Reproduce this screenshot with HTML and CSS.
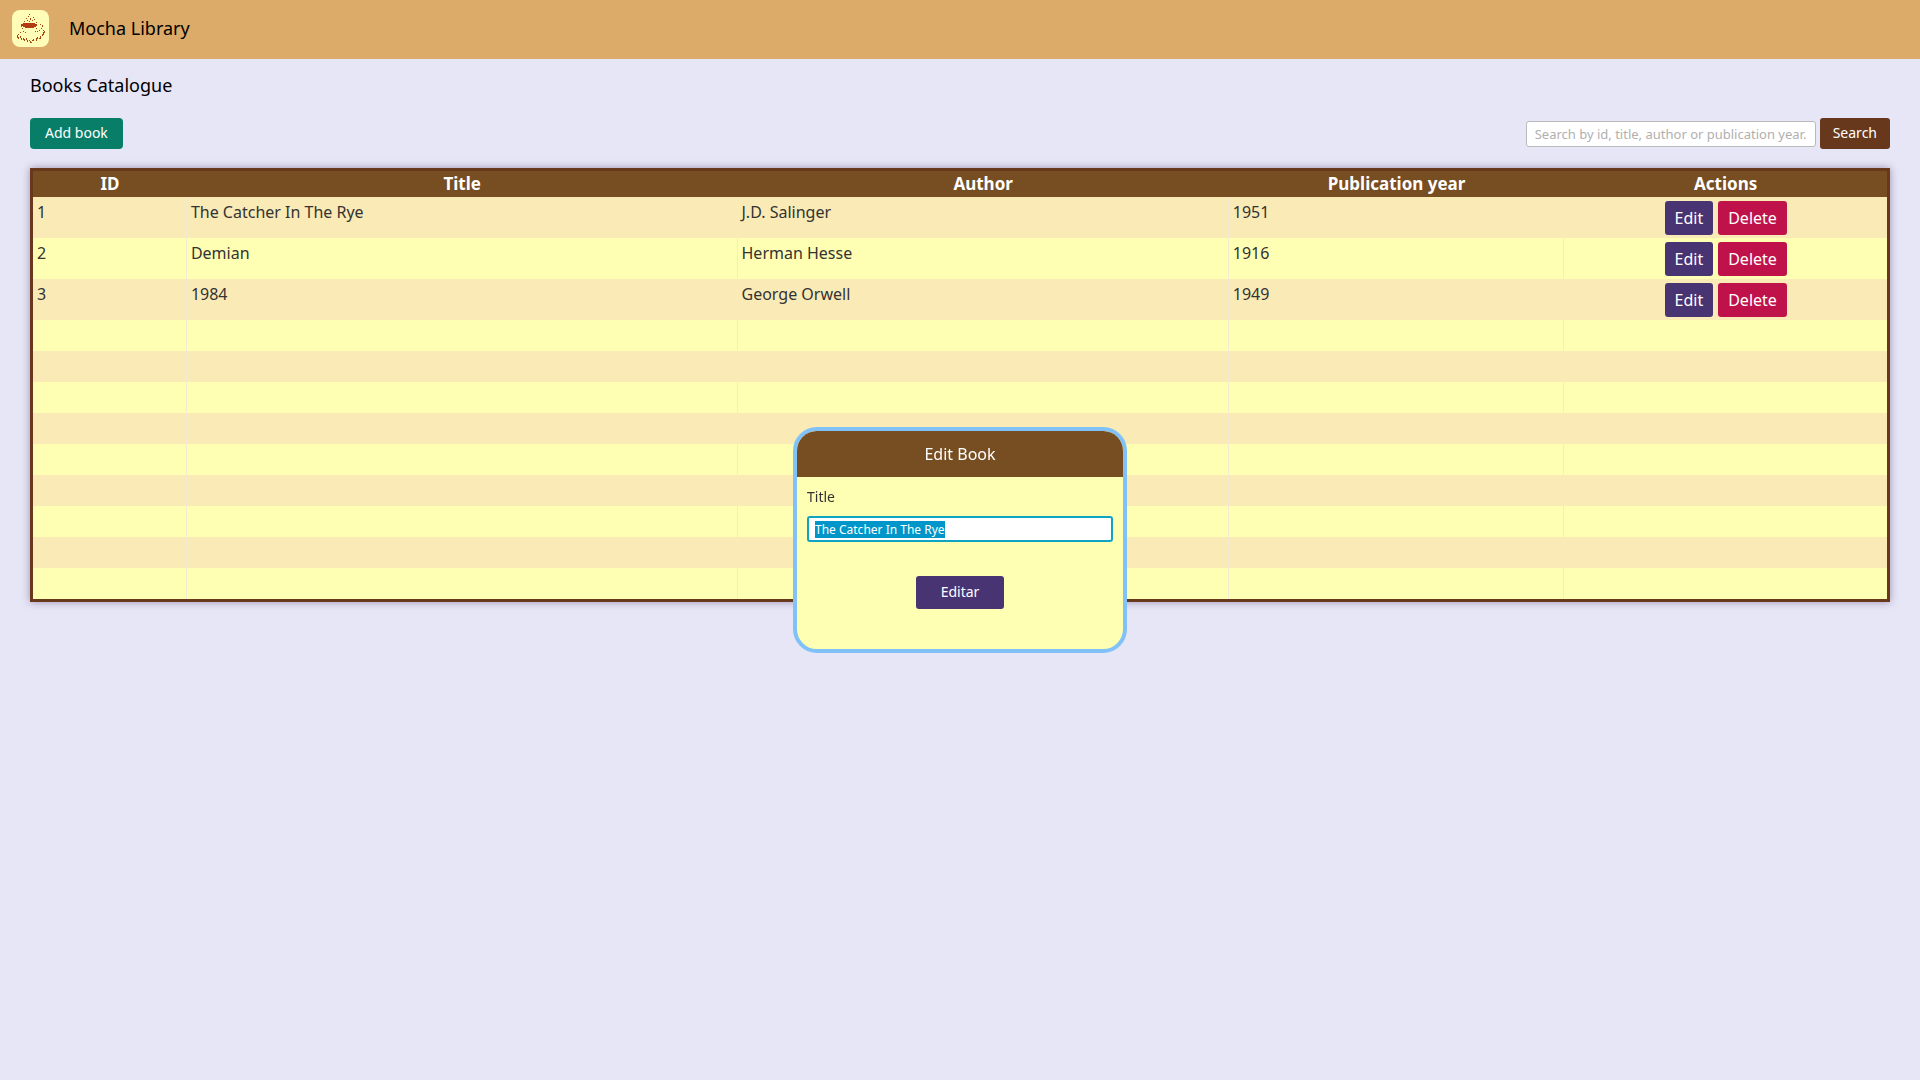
FILE: index.html
```html
<!DOCTYPE html>
<html lang="en">
<head>
<meta charset="utf-8">
<meta name="viewport" content="width=device-width, initial-scale=1">
<title>Mocha Library</title>
<link rel="stylesheet" href="styles.css">
</head>
<body>
<header class="topbar">
  <svg class="logo" viewBox="0 0 37 37" shape-rendering="crispEdges" aria-hidden="true">
    <rect width="37" height="37" rx="8" fill="#fffdb8" shape-rendering="auto"/>
    <path fill="#b23c12" d="M11 13h12v1h2v2h-1v1h-2v1h-9v-1h-2v-1h-2v-2h2z"/>
    <path fill="#a8480f" d="M17 4h1v1h-1zM14 8h1v1h-1zM16 6h1v1h-1zM18 8h1v2h-1zM21 7h1v1h-1zM15 10h1v1h-1zM20 10h1v1h-1zM22 9h1v1h-1zM12 11h1v1h-1zM17 11h1v1h-1zM24 12h1v1h-1zM9 15h1v2h-1zM10 18h1v1h-1zM11 21h1v1h-1zM13 22h1v1h-1zM24 18h1v1h-1zM23 21h1v1h-1zM28 14h1v1h-1zM30 15h1v2h-1zM29 18h1v1h-1zM27 20h1v1h-1zM25 21h1v1h-1zM8 22h1v1h-1zM6 24h1v1h-1zM31 20h1v1h-1zM5 25h1v3h-1zM6 27h1v2h-1zM8 26h1v2h-1zM9 28h1v2h-1zM11 28h1v2h-1zM12 29h1v2h-1zM14 28h1v2h-1zM15 30h1v2h-1zM17 30h1v1h-1zM18 31h1v2h-1zM19 32h1v1h-1zM21 29h1v2h-1zM20 30h1v1h-1zM24 28h1v3h-1zM25 27h1v2h-1zM28 26h1v3h-1zM27 28h1v1h-1zM31 22h1v3h-1zM30 24h1v2h-1zM32 21h1v2h-1z"/>
  </svg>
  <span class="brand">Mocha Library</span>
</header>

<main class="page">
  <h1 class="heading">Books Catalogue</h1>
  <div class="toolbar">
    <button class="btn btn-add" type="button">Add book</button>
    <form class="search" role="search">
      <input class="field search-field" type="text" aria-label="Search books" placeholder="Search by id, title, author or publication year.">
      <button class="btn btn-search" type="button">Search</button>
    </form>
  </div>

  <table class="books">
    <colgroup>
      <col class="col-id"><col class="col-title"><col class="col-author"><col class="col-year"><col class="col-actions">
    </colgroup>
    <thead>
      <tr><th>ID</th><th>Title</th><th>Author</th><th>Publication year</th><th>Actions</th></tr>
    </thead>
    <tbody>
      <tr><td>1</td><td>The Catcher In The Rye</td><td>J.D. Salinger</td><td>1951</td><td><div class="actions"><button class="btn btn-edit" type="button">Edit</button><button class="btn btn-delete" type="button">Delete</button></div></td></tr>
      <tr><td>2</td><td>Demian</td><td>Herman Hesse</td><td>1916</td><td><div class="actions"><button class="btn btn-edit" type="button">Edit</button><button class="btn btn-delete" type="button">Delete</button></div></td></tr>
      <tr><td>3</td><td>1984</td><td>George Orwell</td><td>1949</td><td><div class="actions"><button class="btn btn-edit" type="button">Edit</button><button class="btn btn-delete" type="button">Delete</button></div></td></tr>
      <tr><td></td><td></td><td></td><td></td><td></td></tr>
      <tr><td></td><td></td><td></td><td></td><td></td></tr>
      <tr><td></td><td></td><td></td><td></td><td></td></tr>
      <tr><td></td><td></td><td></td><td></td><td></td></tr>
      <tr><td></td><td></td><td></td><td></td><td></td></tr>
      <tr><td></td><td></td><td></td><td></td><td></td></tr>
      <tr><td></td><td></td><td></td><td></td><td></td></tr>
      <tr><td></td><td></td><td></td><td></td><td></td></tr>
      <tr><td></td><td></td><td></td><td></td><td></td></tr>
    </tbody>
  </table>
</main>

<div class="overlay">
  <form class="modal" role="dialog" aria-labelledby="modal-title">
    <h2 class="modal-title" id="modal-title">Edit Book</h2>
    <div class="modal-body">
      <label class="label" for="book-title">Title</label>
      <input class="field title-field" id="book-title" type="text" value="The Catcher In The Rye">
      <button class="btn btn-submit" type="button">Editar</button>
    </div>
  </form>
</div>
<script src="script.js"></script>
</body>
</html>
```
FILE: styles.css
```css
*,
*::before,
*::after {
  box-sizing: border-box;
}

body {
  margin: 0;
  min-height: 100vh;
  background: #e7e6f7;
  color: #333;
  font-family: "Noto Sans", sans-serif;
  font-size: 16px;
  line-height: 22px;
}

.topbar {
  display: flex;
  align-items: center;
  gap: 20px;
  height: 59px;
  padding: 0 12px 2px;
  background: #dcab69;
}

.logo {
  width: 37px;
  height: 37px;
}

.brand,
.heading {
  color: #000;
  font-size: 18px;
  font-weight: 400;
  line-height: 24px;
}

.brand {
  padding-bottom: 2px;
}

.page {
  padding: 14px 30px 30px;
}

.heading {
  margin: 0 0 21px;
}

.toolbar {
  display: flex;
  align-items: center;
  justify-content: space-between;
  margin-bottom: 19px;
}

.search {
  display: flex;
  align-items: center;
  gap: 4px;
}

.btn {
  border: 0;
  border-radius: 3px;
  color: #fff;
  font-family: inherit;
  font-size: 16px;
  line-height: 22px;
}

.btn-add,
.btn-search {
  height: 31px;
  padding: 0 13px 2px;
  font-size: 14px;
}

.btn-add {
  padding: 0 15px 2px;
  border-radius: 4px;
  background: #087e68;
}

.btn-search {
  background: #68381c;
}

.field {
  border: 1px solid #bababa;
  border-radius: 3px;
  background: #fff;
  color: #333;
  font-family: inherit;
}

.search-field {
  width: 290px;
  height: 26px;
  padding: 0 8px;
  font-size: 13px;
}

.search-field::placeholder {
  color: #b0b0b0;
}

.books {
  width: 100%;
  table-layout: fixed;
  border: 3px solid #68381c;
  border-spacing: 0;
  box-shadow: 0 0 8px rgba(40, 20, 60, 0.4);
}

.col-id { width: 8.3%; }
.col-title { width: 29.7%; }
.col-author { width: 26.5%; }
.col-year { width: 18.1%; }
.col-actions { width: 17.4%; }

.books th {
  height: 26px;
  padding: 0;
  background: #774d22;
  color: #fff;
  font-size: 17px;
  font-weight: 700;
}

.books td {
  height: 31px;
  padding: 4px 4px 3px;
  border-right: 1px solid #f3ead2;
  background: #ffffb3;
  vertical-align: top;
}

.books td:last-child {
  border-right: 0;
}

.books tr:nth-child(odd) td {
  background: #faeab6;
}

.actions {
  display: flex;
  justify-content: center;
  gap: 5px;
}

.btn-edit,
.btn-delete {
  height: 34px;
  padding: 0 10px;
}

.btn-edit,
.btn-submit {
  background: #483373;
}

.btn-delete {
  background: #c0124a;
}

.overlay {
  position: fixed;
  inset: 0;
  display: grid;
  place-items: center;
}

.modal {
  width: 334px;
  overflow: hidden;
  border: 4px solid #80c2f7;
  border-radius: 24px;
  background: #ffffb3;
}

.modal-title {
  margin: 0;
  padding: 12px;
  background: #774d22;
  color: #fff;
  font-size: 16px;
  font-weight: 400;
  line-height: 22px;
  text-align: center;
}

.modal-body {
  display: flex;
  flex-direction: column;
  padding: 10px 10px 40px;
}

.label {
  margin-bottom: 9px;
  font-size: 14px;
  line-height: 20px;
}

.title-field {
  height: 26px;
  padding: 0 7px;
  font-size: 12px;
}

.title-field:focus {
  border: 2px solid #0fa3c4;
  padding: 0 6px;
  outline: 0;
}

.title-field::selection {
  background: #0096c9;
  color: #fff;
}

.btn-submit {
  align-self: center;
  height: 33px;
  margin-top: 34px;
  padding: 0 25px 2px;
  font-size: 14px;
}
```
FILE: script.js
```js
const titleField = document.getElementById('book-title');
titleField.focus();
titleField.select();
```
